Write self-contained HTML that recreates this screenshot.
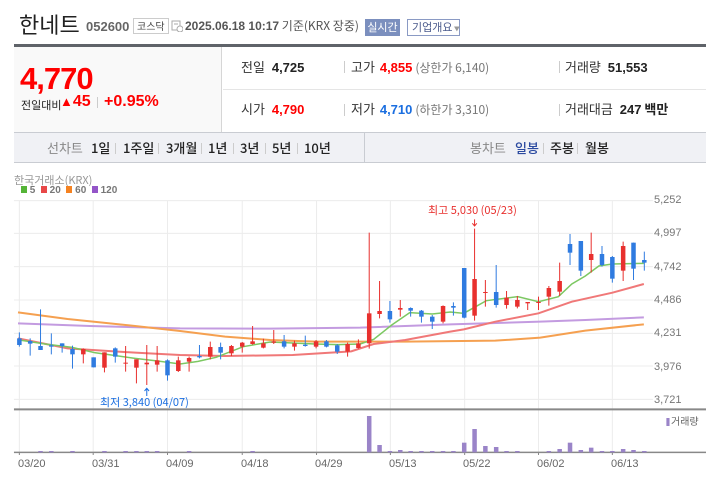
<!DOCTYPE html>
<html><head><meta charset="utf-8"><style>
*{margin:0;padding:0;box-sizing:border-box}
body{width:706px;height:500px;background:#fff;font-family:"Liberation Sans","Noto Sans CJK KR",sans-serif;position:relative;overflow:hidden;color:#333}
.a{position:absolute;white-space:nowrap}
.k{font-family:"Noto Sans CJK KR","Liberation Sans",sans-serif}
.t{position:absolute;top:139px;font-size:13px;line-height:18px;color:#222;font-family:"Noto Sans CJK KR",sans-serif;font-weight:500}
.s{position:absolute;top:143px;width:1px;height:11px;background:#ccc}
</style></head><body>
<div class="a k" style="left:19px;top:9px;font-size:22px;line-height:30px;color:#222">한네트</div>
<div class="a" style="left:86px;top:19px;font-size:13px;font-weight:bold;color:#666">052600</div>
<div class="a k" style="left:133px;top:18px;height:16px;padding:0 3px;border:1px solid #ccc;font-size:10px;line-height:14px;color:#444">코스닥</div>
<svg class="a" style="left:171px;top:20px" width="12" height="12"><rect x="1" y="1" width="8" height="9" fill="none" stroke="#aaa"/><line x1="3" y1="4" x2="7" y2="4" stroke="#aaa"/><circle cx="9" cy="9" r="3" fill="#fff" stroke="#aaa"/></svg>
<div class="a k" style="left:185px;top:17px;font-size:12px;line-height:18px;color:#555"><b style="font-family:'Liberation Sans'">2025.06.18 10:17</b> 기준(KRX 장중)</div>
<div class="a k" style="left:365px;top:19px;width:35px;height:17px;background:#7b8fbe;color:#fff;font-size:11px;line-height:17px;text-align:center">실시간</div>
<div class="a k" style="left:407px;top:19px;width:53px;height:17px;border:1px solid #8a9ac4;color:#4a5a8c;font-size:11px;line-height:15px;padding-left:4px">기업개요<span style="font-size:6px;color:#999"> ▼</span></div>
<div class="a" style="left:14px;top:44px;width:692px;height:3px;background:#5f6369"></div>
<div class="a" style="left:14px;top:47px;width:208px;height:85px;background:#f9f9f9;border-right:1px solid #d6d6d6"></div>
<div class="a" style="left:20px;top:61px;font-size:31px;font-weight:bold;color:#f00;letter-spacing:-1px">4,770</div>
<div class="a k" style="left:21px;top:97px;font-size:11px;color:#222">전일대비</div>
<div class="a" style="left:60px;top:93px;font-size:16px;font-weight:bold;color:#f00"><span style="font-size:13px">▲</span>45</div>
<div class="a" style="left:97px;top:97px;width:1px;height:11px;background:#ccc"></div>
<div class="a" style="left:104px;top:93px;font-size:16px;font-weight:bold;color:#f00">+0.95%</div>
<div class="a" style="left:223px;top:89px;width:483px;height:1px;background:#e5e5e5"></div>
<div class="a k" style="left:241px;top:58px;font-size:13px;line-height:18px;color:#333">전일 <b style="font-family:'Liberation Sans';margin-left:4px;color:#222">4,725</b></div>
<div class="a k" style="left:241px;top:100px;font-size:13px;line-height:18px;color:#333">시가 <b style="font-family:'Liberation Sans';margin-left:4px;color:#f00">4,790</b></div>
<div class="a" style="left:344px;top:61px;width:1px;height:12px;background:#ccc"></div>
<div class="a" style="left:344px;top:104px;width:1px;height:12px;background:#ccc"></div>
<div class="a k" style="left:351px;top:58px;font-size:13px;line-height:18px;color:#333">고가 <b style="font-family:'Liberation Sans';margin-left:2px;color:#f00">4,855</b> <span style="color:#777;font-size:12px">(상한가 6,140)</span></div>
<div class="a k" style="left:351px;top:100px;font-size:13px;line-height:18px;color:#333">저가 <b style="font-family:'Liberation Sans';margin-left:2px;color:#1a6ee0">4,710</b> <span style="color:#777;font-size:12px">(하한가 3,310)</span></div>
<div class="a" style="left:559px;top:61px;width:1px;height:12px;background:#ccc"></div>
<div class="a" style="left:559px;top:104px;width:1px;height:12px;background:#ccc"></div>
<div class="a k" style="left:565px;top:58px;font-size:13px;line-height:18px;color:#333">거래량 <b style="font-family:'Liberation Sans';margin-left:4px;color:#222">51,553</b></div>
<div class="a k" style="left:565px;top:100px;font-size:13px;line-height:18px;color:#333">거래대금 <b style="font-family:'Liberation Sans';margin-left:4px;color:#222">247</b> <b style="color:#222">백만</b></div>
<div class="a" style="left:14px;top:132px;width:692px;height:31px;background:#f0f1f5;border-top:1px solid #c9ccd2;border-bottom:1px solid #c9ccd2"></div>
<div class="a" style="left:364px;top:132px;width:1px;height:31px;background:#c9ccd2"></div>
<div class="t" style="left:47px;color:#888;font-weight:400">선차트</div>
<div class="t" style="left:91px">1일</div><div class="s" style="left:115px"></div>
<div class="t" style="left:123px">1주일</div><div class="s" style="left:158px"></div>
<div class="t" style="left:166px">3개월</div><div class="s" style="left:201px"></div>
<div class="t" style="left:208px">1년</div><div class="s" style="left:233px"></div>
<div class="t" style="left:240px">3년</div><div class="s" style="left:265px"></div>
<div class="t" style="left:272px">5년</div><div class="s" style="left:297px"></div>
<div class="t" style="left:304px">10년</div>
<div class="t" style="left:470px;color:#888;font-weight:400">봉차트</div>
<div class="t" style="left:515px;color:#2b4aa0">일봉</div><div class="s" style="left:543px"></div>
<div class="t" style="left:550px">주봉</div><div class="s" style="left:577px"></div>
<div class="t" style="left:585px">월봉</div>
<svg class="a" style="left:0;top:170px" width="706" height="330" viewBox="0 0 1568 990" preserveAspectRatio="none">
<g stroke="#ececec" stroke-width="1" fill="none">
<path vector-effect="non-scaling-stroke" d="M31 92H1450M31 190H1450M31 290H1450M31 390H1450M31 490H1450M31 588H1450M31 688H1450"/>
<path vector-effect="non-scaling-stroke" d="M43 92V718M207 92V718M372 92V718M538 92V718M703 92V718M867 92V718M1032 92V718M1196 92V718M1360 92V718M43 718V847M207 718V847M372 718V847M538 718V847M703 718V847M867 718V847M1032 718V847M1196 718V847M1360 718V847"/>
</g>
<line x1="31" y1="718" x2="1568" y2="718" stroke="#888" stroke-width="2" vector-effect="non-scaling-stroke"/>
<line x1="31" y1="847" x2="1568" y2="847" stroke="#888" stroke-width="1.5" vector-effect="non-scaling-stroke"/>
<path vector-effect="non-scaling-stroke" d="M43 847v8M207 847v8M372 847v8M538 847v8M703 847v8M867 847v8M1032 847v8M1196 847v8M1360 847v8" stroke="#888"/>
<g fill="none">
<polyline vector-effect="non-scaling-stroke" stroke="#c39be0" stroke-width="2" points="40,460 200,468 400,475 600,476 800,473 1000,463 1200,455 1300,450 1430,442"/>
<polyline vector-effect="non-scaling-stroke" stroke="#f5a050" stroke-width="2" points="40,427 150,447 300,468 400,483 500,500 600,510 700,515 900,515 1100,512 1200,503 1300,482 1430,463"/>
<polyline vector-effect="non-scaling-stroke" stroke="#f07878" stroke-width="2" points="40,505 150,535 300,548 400,555 500,558 650,555 780,544 830,522 900,510 1000,485 1030,478 1100,455 1196,430 1270,395 1360,368 1430,342"/>
<polyline vector-effect="non-scaling-stroke" stroke="#7cc862" stroke-width="1.5" points="43,510 100,522 160,532 210,548 300,565 350,573 400,582 440,574 480,562 540,530 600,516 700,522 750,524 800,522 830,508 870,465 910,428 960,432 1000,426 1030,430 1080,392 1150,380 1196,395 1240,380 1270,342 1300,318 1330,288 1360,282 1430,280"/>
</g>
<g stroke-width="1">
<g fill="#2f7be0" stroke="#2f7be0">
<path vector-effect="non-scaling-stroke" d="M43 487V530M67 505V557M90 418V540M114 490V553M138 520V548M161 527V596M208 562V592M256 532V578M372 568V632M443 525V565M490 518V568M631 495V535M678 497V530M725 510V532M749 522V552M866 393V458M912 412V440M936 420V458M960 435V477M1007 397V437M1031 294V445M1102 285V413M1266 192V285M1290 213V318M1337 228V290M1360 258V338M1407 218V330M1431 245V302"/>
<g stroke="none"><rect x="38" y="505" width="10" height="20"/><rect x="62" y="513" width="10" height="8"/><rect x="85" y="528" width="10" height="12"/><rect x="109" y="526" width="10" height="4"/><rect x="133" y="520" width="10" height="8"/><rect x="156" y="537" width="10" height="16"/><rect x="203" y="562" width="10" height="30"/><rect x="251" y="535" width="10" height="25"/><rect x="367" y="571" width="10" height="45"/><rect x="438" y="558" width="10" height="4"/><rect x="485" y="531" width="10" height="17"/><rect x="626" y="514" width="10" height="16"/><rect x="673" y="524" width="10" height="4"/><rect x="720" y="514" width="10" height="16"/><rect x="744" y="526" width="10" height="19"/><rect x="861" y="423" width="10" height="25"/><rect x="907" y="414" width="10" height="8"/><rect x="931" y="422" width="10" height="18"/><rect x="955" y="440" width="10" height="15"/><rect x="1002" y="408" width="10" height="5"/><rect x="1026" y="294" width="10" height="149"/><rect x="1097" y="366" width="10" height="39"/><rect x="1261" y="222" width="10" height="26"/><rect x="1285" y="213" width="10" height="89"/><rect x="1332" y="252" width="10" height="33"/><rect x="1355" y="261" width="10" height="65"/><rect x="1402" y="218" width="10" height="78"/><rect x="1426" y="270" width="10" height="8"/></g>
</g>
<g fill="#e8302e" stroke="#e8302e">
<path vector-effect="non-scaling-stroke" d="M185 535V580M232 547V607M279 528V605M303 568V640M326 525V645M349 528V605M396 560V606M420 560V605M467 515V568M514 525V558M538 516V548M561 468V524M585 506V535M608 480V522M654 512V542M702 510V535M772 518V560M796 508V536M820 188V536M843 333V445M889 390V440M984 406V460M1054 176V452M1078 330V410M1125 363V416M1149 378V415M1172 396V420M1196 380V420M1219 348V407M1243 278V378M1313 188V308M1384 215V333"/>
<g stroke="none"><rect x="180" y="537" width="10" height="16"/><rect x="227" y="547" width="10" height="46"/><rect x="274" y="578" width="10" height="3"/><rect x="298" y="568" width="10" height="25"/><rect x="321" y="578" width="10" height="5"/><rect x="344" y="571" width="10" height="13"/><rect x="391" y="571" width="10" height="32"/><rect x="415" y="564" width="10" height="11"/><rect x="462" y="531" width="10" height="29"/><rect x="509" y="528" width="10" height="22"/><rect x="533" y="518" width="10" height="12"/><rect x="556" y="514" width="10" height="8"/><rect x="580" y="520" width="10" height="13"/><rect x="603" y="514" width="10" height="4"/><rect x="649" y="520" width="10" height="10"/><rect x="697" y="514" width="10" height="16"/><rect x="767" y="522" width="10" height="23"/><rect x="791" y="520" width="10" height="14"/><rect x="815" y="430" width="10" height="90"/><rect x="838" y="423" width="10" height="9"/><rect x="884" y="414" width="10" height="5"/><rect x="979" y="408" width="10" height="47"/><rect x="1049" y="327" width="10" height="110"/><rect x="1073" y="366" width="10" height="3"/><rect x="1120" y="383" width="10" height="22"/><rect x="1144" y="390" width="10" height="20"/><rect x="1167" y="396" width="10" height="4"/><rect x="1191" y="396" width="10" height="3"/><rect x="1214" y="354" width="10" height="26"/><rect x="1238" y="333" width="10" height="32"/><rect x="1308" y="252" width="10" height="18"/><rect x="1379" y="228" width="10" height="74"/></g>
</g>
</g>
<g fill="#9a84c8">
<rect x="815" y="738" width="10" height="109"/><rect x="838" y="825" width="10" height="22"/><rect x="1026" y="818" width="10" height="29"/><rect x="1049" y="777" width="10" height="70"/><rect x="1073" y="828" width="10" height="19"/><rect x="1097" y="831" width="10" height="16"/><rect x="1238" y="837" width="10" height="10"/><rect x="1261" y="818" width="10" height="29"/><rect x="1308" y="833" width="10" height="14"/><rect x="1379" y="837" width="10" height="10"/><rect x="1285" y="840" width="10" height="7"/><rect x="1402" y="840" width="10" height="7"/>
<path d="M85 843h10v4h-10zM109 843h10v4h-10zM156 843h10v4h-10zM227 843h10v4h-10zM274 843h10v4h-10zM298 843h10v4h-10zM321 843h10v4h-10zM344 843h10v4h-10zM415 843h10v4h-10zM556 843h10v4h-10zM861 843h10v4h-10zM884 840h10v7h-10zM907 843h10v4h-10zM931 843h10v4h-10zM955 843h10v4h-10zM979 843h10v4h-10zM1002 843h10v4h-10zM1120 843h10v4h-10zM1144 843h10v4h-10zM1214 843h10v4h-10zM1332 843h10v4h-10zM1355 843h10v4h-10zM1426 843h10v4h-10z"/>
<rect x="1480" y="744" width="7" height="24"/>
</g>
<path vector-effect="non-scaling-stroke" d="M1054 148V168M1049 160L1054 168L1059 160" stroke="#e8302e" fill="none"/>
<path vector-effect="non-scaling-stroke" d="M326 678V655M321 663L326 655L331 663" stroke="#1a6ee0" fill="none"/>
</svg>
<div class="a k" style="left:14px;top:173px;font-size:11px;color:#999;line-height:14px">한국거래소(KRX)</div>
<div class="a" style="left:21px;top:185px;font-size:10px;font-weight:bold;color:#777;line-height:12px">
<span style="display:inline-block;width:6px;height:7px;background:#55b437"></span> 5 &nbsp;<span style="display:inline-block;width:6px;height:7px;background:#e84848"></span> 20 &nbsp;<span style="display:inline-block;width:6px;height:7px;background:#f58220"></span> 60 &nbsp;<span style="display:inline-block;width:6px;height:7px;background:#9455c8"></span> 120</div>
<div class="a" style="left:654px;top:193px;font-size:11px;color:#777;line-height:14px">5,252</div>
<div class="a" style="left:654px;top:226px;font-size:11px;color:#777;line-height:14px">4,997</div>
<div class="a" style="left:654px;top:260px;font-size:11px;color:#777;line-height:14px">4,742</div>
<div class="a" style="left:654px;top:293px;font-size:11px;color:#777;line-height:14px">4,486</div>
<div class="a" style="left:654px;top:326px;font-size:11px;color:#777;line-height:14px">4,231</div>
<div class="a" style="left:654px;top:360px;font-size:11px;color:#777;line-height:14px">3,976</div>
<div class="a" style="left:654px;top:393px;font-size:11px;color:#777;line-height:14px">3,721</div>
<div class="a k" style="left:428px;top:203px;font-size:11px;color:#e8302e;line-height:14px">최고 5,030 (05/23)</div>
<div class="a k" style="left:100px;top:395px;font-size:11px;color:#1a6ee0;line-height:14px">최저 3,840 (04/07)</div>
<div class="a k" style="left:671px;top:414px;font-size:10px;color:#666;line-height:14px">거래량</div>
<div class="a" style="left:18px;top:457px;font-size:11px;color:#666;line-height:14px">03/20</div>
<div class="a" style="left:92px;top:457px;font-size:11px;color:#666;line-height:14px">03/31</div>
<div class="a" style="left:166px;top:457px;font-size:11px;color:#666;line-height:14px">04/09</div>
<div class="a" style="left:241px;top:457px;font-size:11px;color:#666;line-height:14px">04/18</div>
<div class="a" style="left:315px;top:457px;font-size:11px;color:#666;line-height:14px">04/29</div>
<div class="a" style="left:389px;top:457px;font-size:11px;color:#666;line-height:14px">05/13</div>
<div class="a" style="left:463px;top:457px;font-size:11px;color:#666;line-height:14px">05/22</div>
<div class="a" style="left:537px;top:457px;font-size:11px;color:#666;line-height:14px">06/02</div>
<div class="a" style="left:611px;top:457px;font-size:11px;color:#666;line-height:14px">06/13</div>
</body></html>
